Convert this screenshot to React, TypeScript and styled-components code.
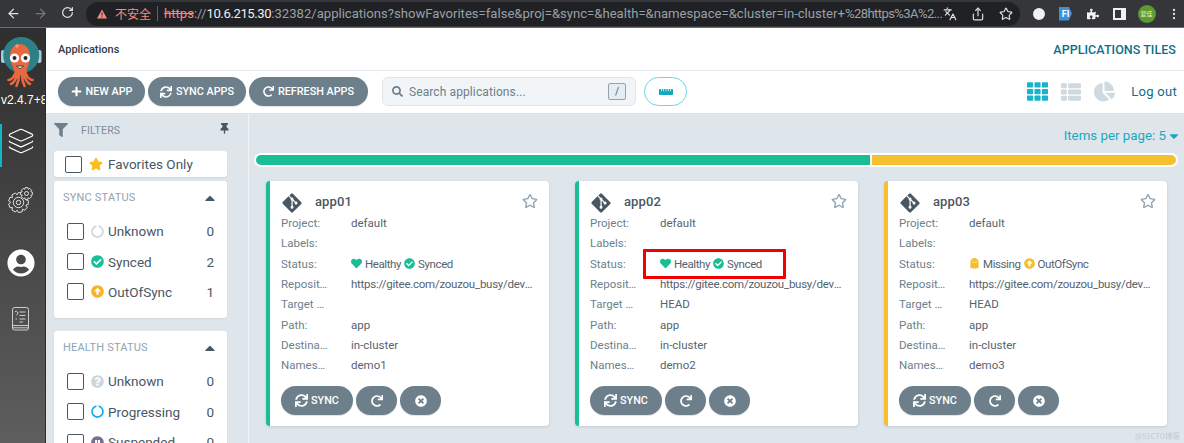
import React from 'react';
import styled, { createGlobalStyle } from 'styled-components';
import {
  FaPlus, FaSync, FaRedo, FaTimesCircle, FaStar, FaRegStar, FaHeart, FaCheckCircle,
  FaArrowAltCircleUp, FaGhost, FaFilter, FaThumbtack, FaTh, FaThList, FaChartPie, FaSearch,
  FaCaretDown, FaCaretUp, FaQuestionCircle, FaCircleNotch, FaPauseCircle, FaGitAlt, FaUserCircle,
  FaRulerHorizontal, FaPuzzlePiece,
} from 'react-icons/fa';
import { ArrowLeft, ArrowRight, RotateCw, Share, Star, EllipsisVertical, Languages, Layers } from 'lucide-react';

const Global = createGlobalStyle`
  html, body { margin: 0; padding: 0; overflow: hidden; background: #fff; }
  * { box-sizing: border-box; }
  body { font-family: Roboto, "Liberation Sans", sans-serif; }
`;

const Page = styled.div`
  width: 1184px; height: 443px; overflow: hidden; position: relative;
  display: flex; flex-direction: column;
`;

/* browser chrome */
const Chrome = styled.div`
  height: 28px; flex: none; background: #35363a; display: flex; align-items: center;
  border-bottom: 1px solid #6d6e72; color: #dfe1e5;
`;
const NavBtn = styled.span<{ $dim?: boolean }>`
  width: 27px; display: flex; justify-content: center; color: ${p => (p.$dim ? '#75777b' : '#e3e4e6')};
`;
const NavGroup = styled.div`display: flex; flex: none; width: 86px;`;
const Pill = styled.div`
  flex: none; width: 934px; height: 24px; border-radius: 12px; background: #202124; display: flex; align-items: center;
  padding: 0 0 0 11px; font: 400 13px/24px Roboto, sans-serif; white-space: nowrap; overflow: hidden;
`;
const Warn = styled.span`color: #f28b82; font-size: 12px; font-family: "Noto Sans CJK SC", sans-serif; display: flex; align-items: center; gap: 8px; flex: none;`;
const Divider = styled.span`width: 1px; height: 15px; background: #5f6368; margin: 0 6px; flex: none;`;
const Url = styled.span`color: #9aa0a6; width: 779px; flex: none; overflow: hidden; font-size: 13.1px;`;
const Strike = styled.span`color: #f28b82; text-decoration: line-through;`;
const Host = styled.span`color: #eceef0; letter-spacing: -.4px;`;
const UrlTail = styled.span`letter-spacing: -.6px;`;
const PillIcons = styled.div`display: flex; gap: 14px; color: #dfe1e5; align-items: center; flex: none;`;
const Exts = styled.div`display: flex; flex: none; align-items: center; padding-left: 5px;`;
const Ext = styled.span`width: 27px; flex: none; display: flex; justify-content: center; align-items: center;`;
const ExtRound = styled.span`
  width: 12px; height: 12px; border-radius: 50%; background: #f1f1f1; border: 3px solid #f1f1f1; display: block;
`;
const ExtFt = styled.span`
  width: 13px; height: 14px; background: #3f8fdc; color: #fff; font: 700 9px/14px Roboto, sans-serif; text-align: center;
  clip-path: polygon(0 0, 75% 0, 100% 50%, 75% 100%, 0 100%);
`;
const SidePanel = styled.span`width: 13px; height: 12px; border: 2px solid #f1f1f1; border-right-width: 5px; display: block;`;
const Avatar = styled.span`
  width: 18px; height: 18px; border-radius: 50%; background: #5e9a33; color: #e9f3df;
  font: 400 6px/18px "Noto Sans CJK SC", sans-serif; text-align: center;
`;

/* app */
const Shell = styled.div`flex: 1; display: flex; min-height: 0;`;
const Sidebar = styled.nav`
  width: 46px; flex: none; background: linear-gradient(180deg, #2e2e2e 0%, #5e5e5e 100%);
  border-right: 1px solid #2b2b2b; display: flex; flex-direction: column; color: #fff; overflow: hidden;
  padding-top: 6px;
`;
const LogoWrap = styled.div`height: 58px; display: flex; justify-content: center; flex: none;`;
const Version = styled.div`
  font: 400 12px/14px "Liberation Sans", sans-serif; color: #fff; white-space: nowrap; padding-left: 1px; margin-top: 1px; height: 14px;
`;
const NavItem = styled.div<{ $active?: boolean; $h: number; $mt: number }>`
  height: ${p => p.$h}px; margin-top: ${p => p.$mt}px; flex: none; display: flex; align-items: center; justify-content: center;
  padding-right: 6px; padding-bottom: ${p => (p.$active ? 10 : 0)}px;
  border-left: 2px solid ${p => (p.$active ? '#13b5cb' : 'transparent')};
`;

const Main = styled.div`flex: 1; display: flex; flex-direction: column; min-width: 0;`;
const Header = styled.header`
  height: 43px; flex: none; background: #fff; border-bottom: 1px solid #e6ecef; display: flex; align-items: center;
  justify-content: space-between; padding: 1px 8px 0 12px;
`;
const Crumb = styled.div`font: 500 11px Roboto, sans-serif; color: #363c4a;`;
const PageTitle = styled.div`font: 500 12.5px Roboto, sans-serif; color: #0c6f8e; letter-spacing: .05px;`;
const Toolbar = styled.div`
  height: 43px; flex: none; background: #fff; display: flex; align-items: center; padding: 0 7px 1px 12px;
  border-bottom: 1px solid #dce4e8;
`;
const PillButton = styled.button<{ $w: number }>`
  width: ${p => p.$w}px; height: 29px; border: 0; border-radius: 15px; background: #6d7f8b; color: #fff; padding: 0;
  font: 500 10.8px Roboto, sans-serif; display: flex; align-items: center; justify-content: center; gap: 4px; margin-right: 3px;
  box-shadow: 0 1px 1px rgba(0,0,0,.12);
`;
const Search = styled.div`
  width: 254px; height: 29px; margin-left: 11px; background: #f1f5f7; border: 1px solid #dfe6ea; border-radius: 6px;
  display: flex; align-items: center; padding: 0 9px; color: #6d7f8b; font: 400 12px Roboto, sans-serif; gap: 6px;
`;
const SearchText = styled.span`flex: 1; letter-spacing: .1px;`;
const Kbd = styled.span`
  width: 18px; height: 17px; border: 1px solid #8fa4b1; border-radius: 2px; background: #e6ecef; font: 400 10px/15px Roboto; text-align: center; color: #495763;
`;
const RulerButton = styled.button`
  width: 43px; height: 29px; margin-left: 8px; border: 1px solid #6fd3e3; border-radius: 15px; background: #fff; color: #11a9c1;
  display: flex; align-items: center; justify-content: center; padding: 0;
`;
const Tools = styled.div`margin-left: auto; display: flex; align-items: center; gap: 13px;`;
const ViewIcon = styled.span<{ $on?: boolean }>`color: ${p => (p.$on ? '#18b4cd' : '#cfd9e0')}; display: flex;`;
const Logout = styled.span`font: 400 13px Roboto, sans-serif; color: #0c6f8e; margin-left: 3px; letter-spacing: .3px;`;

const Content = styled.div`flex: 1; display: flex; min-height: 0; background: #dee6eb;`;
const Filters = styled.aside`
  width: 203px; flex: none; padding: 6px 21px 0 8px; border-right: 1px solid #f3f6f8; overflow: hidden;
`;
const FilterHead = styled.div`
  display: flex; align-items: center; height: 20px; margin-bottom: 11px; color: #6d7f8b;
  font: 400 10.5px Roboto, sans-serif; letter-spacing: .2px;
`;
const FilterLabel = styled.span`margin-left: 13px; flex: 1; color: #7d8c99;`;
const PinSlot = styled.span`color: #495763; display: flex; margin-right: -3px; margin-top: -4px;`;
const FavCard = styled.div`
  height: 26px; background: #fff; border-radius: 3px; display: flex; align-items: center; padding-left: 11px;
  font: 400 13.5px Roboto, sans-serif; color: #495763; box-shadow: 0 1px 2px rgba(0,0,0,.07); margin-bottom: 4px;
`;
const Check = styled.span`
  width: 17px; height: 17px; border: 1.5px solid #495763; border-radius: 2px; background: #fff; flex: none; display: block;
`;
const FilterCard = styled.section`
  background: #fff; border-radius: 3px; padding: 10px 9px 11px 9px; margin-bottom: 13px; box-shadow: 0 1px 2px rgba(0,0,0,.07);
`;
const CardHead = styled.div`
  display: flex; justify-content: space-between; align-items: center; color: #8fa4b1; font: 400 11px/13px Roboto, sans-serif; letter-spacing: .2px;
  margin-bottom: 12px; height: 13px;
`;
const Caret = styled.span`color: #495763; display: flex;`;
const FilterRow = styled.div`
  height: 30.4px; display: flex; align-items: center; padding-left: 4px; color: #495763; font: 400 13.5px Roboto, sans-serif;
`;
const RowIcon = styled.span`width: 14px; margin: 0 4px 0 6px; display: flex; justify-content: center;`;
const RowText = styled.span`flex: 1;`;
const Count = styled.span`margin-right: 4px;`;
const FavStar = styled.span`color: #fbbf1c; display: flex; margin: 0 5px 0 7px;`;

const Apps = styled.div`flex: 1; padding: 13px 6px 0 5px; min-width: 0; display: flex; flex-direction: column;`;
const PerPage = styled.div`
  text-align: right; color: #19a8c0; font: 400 13.3px/18px Roboto, sans-serif; display: flex; justify-content: flex-end; align-items: center; gap: 1px;
`;
const Bar = styled.div`
  display: flex; height: 14px; margin-top: 8px; border: 2px solid #fff; border-radius: 7px; background: #fff; gap: 2px; overflow: hidden; flex: none;
`;
const Seg = styled.div<{ $c: string; $g: number }>`flex: ${p => p.$g}; background: ${p => p.$c};`;
const Grid = styled.div`display: flex; gap: 26px; margin-top: 14px; padding-left: 12px;`;
const Card = styled.article<{ $c: string }>`
  width: 283px; height: 245px; flex: none; background: #fff; border-left: 4px solid ${p => p.$c}; border-radius: 4px;
  box-shadow: 0 1px 3px rgba(0,0,0,.12); padding: 11px 11px 0 11px; color: #495763;
`;
const CardTitleRow = styled.div`display: flex; align-items: center; height: 21px; color: #495763;`;
const CardTitle = styled.span`font: 500 13px Roboto, sans-serif; margin: -2px 0 0 12px; flex: 1; letter-spacing: .1px;`;
const StarSlot = styled.span`color: #8fa4b1; display: flex; margin-top: -3px;`;
const Row = styled.div`display: grid; grid-template-columns: 48px 185px; column-gap: 22px; height: 20.3px; align-items: center; font: 400 11.5px Roboto, sans-serif;`;
const Label = styled.span`color: #6d7f8b; white-space: nowrap; overflow: hidden; text-overflow: ellipsis;`;
const Value = styled.span`white-space: nowrap; overflow: hidden; text-overflow: ellipsis; color: #56636e;`;
const RepoValue = styled(Value)`letter-spacing: -.25px;`;
const StatusValue = styled.span`display: flex; align-items: center; gap: 3px; color: #56636e; position: relative; white-space: nowrap; letter-spacing: -.4px;`;
const RedBox = styled.span`
  position: absolute; left: -17px; top: -8px; width: 143px; height: 30px; border: 3.5px solid #f30000; border-radius: 1px;
`;
const Actions = styled.div`display: flex; gap: 3px; margin-top: 11px;`;
const ActionBtn = styled.button<{ $w: number }>`
  width: ${p => p.$w}px; height: 29px; border: 0; border-radius: 15px; background: #6d7f8b; color: #fff; padding: 0;
  font: 500 10.8px Roboto, sans-serif; display: flex; align-items: center; justify-content: center; gap: 3px;
  box-shadow: 0 1px 1px rgba(0,0,0,.12);
`;
const Watermark = styled.div`
  position: absolute; right: 4px; bottom: 2px; color: #c3cbd0; font: 400 7.5px "Noto Sans CJK SC", sans-serif;
`;

const ArgoLogo = () => (
  <svg width="43" height="58" viewBox="0 0 43 58">
    <rect x="0" y="16" width="4.5" height="13" rx="2" fill="#a6cbdc" />
    <rect x="36" y="16" width="4.5" height="13" rx="2" fill="#a6cbdc" />
    <circle cx="20.2" cy="21" r="18" fill="#2f7f86" />
    <path d="M9 22 C9 6 29 6 29 22 C29 30 25 34 25 41 L14 41 C14 34 9 30 9 22Z" fill="#e9683f" />
    <path d="M14.5 39 C12 45 9 46 7.5 46 M16 40 C15 46 12 49 10 50 M18 41 C18 46 17 49 15.5 52 M21 41 C21 46 22 49 23.5 52 M23 40 C24 46 27 49 29 50 M24.5 39 C27 45 30 46 31.5 46"
      stroke="#e9683f" strokeWidth="2.6" fill="none" strokeLinecap="round" />
    <circle cx="13.5" cy="24" r="4.6" fill="#fff" /><circle cx="24.5" cy="24" r="4.6" fill="#fff" />
    <circle cx="13.5" cy="24" r="2" fill="#2a2a2a" /><circle cx="24.5" cy="24" r="2" fill="#2a2a2a" />
    <path d="M15.5 32 Q19 37 22.5 32 Z" fill="#fff" stroke="#3a2a2a" strokeWidth=".9" />
    <circle cx="16" cy="12" r="1.8" fill="#f29a7a" />
  </svg>
);

const gearPath = (cx: number, cy: number, ro: number, ri: number, teeth: number) => {
  const pts: string[] = [];
  const step = (Math.PI * 2) / teeth;
  for (let i = 0; i < teeth; i++) {
    const a = i * step;
    [[ri, -0.5], [ro, -0.28], [ro, 0.28], [ri, 0.5]].forEach(([r, o]) => {
      const t = a + o * step;
      pts.push(`${(cx + r * Math.cos(t)).toFixed(2)} ${(cy + r * Math.sin(t)).toFixed(2)}`);
    });
  }
  return `M${pts.join(' L')}Z`;
};
const Gears = () => (
  <svg width="25" height="26" viewBox="0 0 25 26" fill="none" stroke="#f0f0f0" strokeWidth=".9" strokeLinejoin="round">
    <path d={gearPath(10.5, 15.5, 10, 7.8, 9)} />
    <circle cx="10.5" cy="15.5" r="5.2" /><circle cx="10.5" cy="15.5" r="2.2" />
    <path d={gearPath(18.5, 6.5, 6, 4.6, 8)} fill="#3f3f3f" /><circle cx="18.5" cy="6.5" r="2" />
  </svg>
);
const Book = () => (
  <svg width="17" height="24" viewBox="0 0 17 24" fill="none" stroke="#eee" strokeWidth=".8">
    <rect x=".5" y=".5" width="16" height="22.5" rx="2" />
    <path d="M.5 18.5 H16.5 M.5 20.8 H16.5 M7.5 5 H13.5 M7.5 8.5 H13.5 M7.5 12 H13.5 M7.5 15 H11 M3.5 12 H5 M2.8 5 Q4.3 3 5.5 5 T4.2 8.5" />
  </svg>
);

type AppData = { name: string; color: string; ns: string; target: string; health: 'ok' | 'missing'; boxed?: boolean };
const apps: AppData[] = [
  { name: 'app01', color: '#18be94', ns: 'demo1', target: '', health: 'ok' },
  { name: 'app02', color: '#18be94', ns: 'demo2', target: 'HEAD', health: 'ok', boxed: true },
  { name: 'app03', color: '#f4c030', ns: 'demo3', target: 'HEAD', health: 'missing' },
];

const AppCard = ({ a }: { a: AppData }) => (
  <Card $c={a.color}>
    <CardTitleRow>
      <FaGitAlt size={22} />
      <CardTitle>{a.name}</CardTitle>
      <StarSlot><FaRegStar size={16} /></StarSlot>
    </CardTitleRow>
    <Row><Label>Project:</Label><Value>default</Value></Row>
    <Row><Label>Labels:</Label><Value /></Row>
    <Row>
      <Label>Status:</Label>
      {a.health === 'ok' ? (
        <StatusValue>
          <FaHeart size={11} color="#18be94" /> Healthy <FaCheckCircle size={11} color="#18be94" /> Synced
          {a.boxed && <RedBox />}
        </StatusValue>
      ) : (
        <StatusValue>
          <FaGhost size={11} color="#f4c030" /> Missing <FaArrowAltCircleUp size={11} color="#f4c030" /> OutOfSync
        </StatusValue>
      )}
    </Row>
    <Row><Label>Repository:</Label><RepoValue>https://gitee.com/zouzou_busy/devops-app</RepoValue></Row>
    <Row><Label>Target Revision:</Label><Value>{a.target}</Value></Row>
    <Row><Label>Path:</Label><Value>app</Value></Row>
    <Row><Label>Destination:</Label><Value>in-cluster</Value></Row>
    <Row><Label>Namespace:</Label><Value>{a.ns}</Value></Row>
    <Actions>
      <ActionBtn $w={72}><FaSync size={13} /> SYNC</ActionBtn>
      <ActionBtn $w={41}><FaRedo size={12} /></ActionBtn>
      <ActionBtn $w={41}><FaTimesCircle size={12} /></ActionBtn>
    </Actions>
  </Card>
);

const FilterItem = ({ icon, text, n }: { icon: React.ReactNode; text: string; n: number }) => (
  <FilterRow>
    <Check />
    <RowIcon>{icon}</RowIcon>
    <RowText>{text}</RowText>
    <Count>{n}</Count>
  </FilterRow>
);

export default function App() {
  return (
    <Page>
      <Global />
      <Chrome>
        <NavGroup>
          <NavBtn><ArrowLeft size={15} /></NavBtn>
          <NavBtn $dim><ArrowRight size={15} /></NavBtn>
          <NavBtn><RotateCw size={13} strokeWidth={2.2} /></NavBtn>
        </NavGroup>
        <Pill>
          <Warn>
            <svg width="10" height="10" viewBox="0 0 10 10"><path d="M5 0.5 L10 9.5 H0Z" fill="#f28b82" /><path d="M5 3.5V6.5M5 7.5V8.5" stroke="#202124" /></svg>
            不安全
          </Warn>
          <Divider />
          <Url>
            <Strike>https</Strike>://<Host>10.6.215.30</Host>:32382/applications?showFavorites=false&amp;proj=&amp;sync=&amp;health=&amp;namespace=&amp;cluster=in-cluster+<UrlTail>%28https%3A%2...</UrlTail>
          </Url>
          <PillIcons>
            <Languages size={14} />
            <Share size={14} />
            <Star size={14} />
          </PillIcons>
        </Pill>
        <Exts>
          <Ext><ExtRound /></Ext>
          <Ext><ExtFt>FI</ExtFt></Ext>
          <Ext><FaPuzzlePiece size={12} color="#f1f1f1" /></Ext>
          <Ext><SidePanel /></Ext>
          <Ext><Avatar>复佳</Avatar></Ext>
          <Ext><EllipsisVertical size={14} /></Ext>
        </Exts>
      </Chrome>
      <Shell>
        <Sidebar>
          <LogoWrap><ArgoLogo /></LogoWrap>
          <Version>v2.4.7+8</Version>
          <NavItem $active $h={43} $mt={17}><Layers size={28} strokeWidth={1} /></NavItem>
          <NavItem $h={26} $mt={20}><Gears /></NavItem>
          <NavItem $h={28} $mt={36}><FaUserCircle size={28} /></NavItem>
          <NavItem $h={24} $mt={30}><Book /></NavItem>
        </Sidebar>
        <Main>
          <Header>
            <Crumb>Applications</Crumb>
            <PageTitle>APPLICATIONS TILES</PageTitle>
          </Header>
          <Toolbar>
            <PillButton $w={87}><FaPlus size={11} /> NEW APP</PillButton>
            <PillButton $w={98}><FaSync size={12} /> SYNC APPS</PillButton>
            <PillButton $w={119}><FaRedo size={11} /> REFRESH APPS</PillButton>
            <Search>
              <FaSearch size={11} />
              <SearchText>Search applications...</SearchText>
              <Kbd>/</Kbd>
            </Search>
            <RulerButton><FaRulerHorizontal size={14} /></RulerButton>
            <Tools>
              <ViewIcon $on><FaTh size={21} /></ViewIcon>
              <ViewIcon><FaThList size={20} /></ViewIcon>
              <ViewIcon><FaChartPie size={21} /></ViewIcon>
              <Logout>Log out</Logout>
            </Tools>
          </Toolbar>
          <Content>
            <Filters>
              <FilterHead>
                <FaFilter size={14} />
                <FilterLabel>FILTERS</FilterLabel>
                <PinSlot><FaThumbtack size={11} /></PinSlot>
              </FilterHead>
              <FavCard>
                <Check />
                <FavStar><FaStar size={14} /></FavStar>
                Favorites Only
              </FavCard>
              <FilterCard>
                <CardHead>SYNC STATUS<Caret><FaCaretUp size={16} /></Caret></CardHead>
                <FilterItem icon={<FaCircleNotch size={13} color="#ccd6dd" />} text="Unknown" n={0} />
                <FilterItem icon={<FaCheckCircle size={13} color="#18be94" />} text="Synced" n={2} />
                <FilterItem icon={<FaArrowAltCircleUp size={13} color="#f4b528" />} text="OutOfSync" n={1} />
              </FilterCard>
              <FilterCard>
                <CardHead>HEALTH STATUS<Caret><FaCaretUp size={16} /></Caret></CardHead>
                <FilterItem icon={<FaQuestionCircle size={13} color="#ccd6dd" />} text="Unknown" n={0} />
                <FilterItem icon={<FaCircleNotch size={13} color="#0dadea" />} text="Progressing" n={0} />
                <FilterItem icon={<FaPauseCircle size={13} color="#766f94" />} text="Suspended" n={0} />
              </FilterCard>
            </Filters>
            <Apps>
              <PerPage>Items per page: 5 <FaCaretDown size={14} style={{ marginRight: -3 }} /></PerPage>
              <Bar>
                <Seg $c="#18be94" $g={2.02} />
                <Seg $c="#f4c030" $g={1} />
              </Bar>
              <Grid>
                {apps.map(a => <AppCard key={a.name} a={a} />)}
              </Grid>
            </Apps>
          </Content>
        </Main>
      </Shell>
      <Watermark>@51CTO博客</Watermark>
    </Page>
  );
}
